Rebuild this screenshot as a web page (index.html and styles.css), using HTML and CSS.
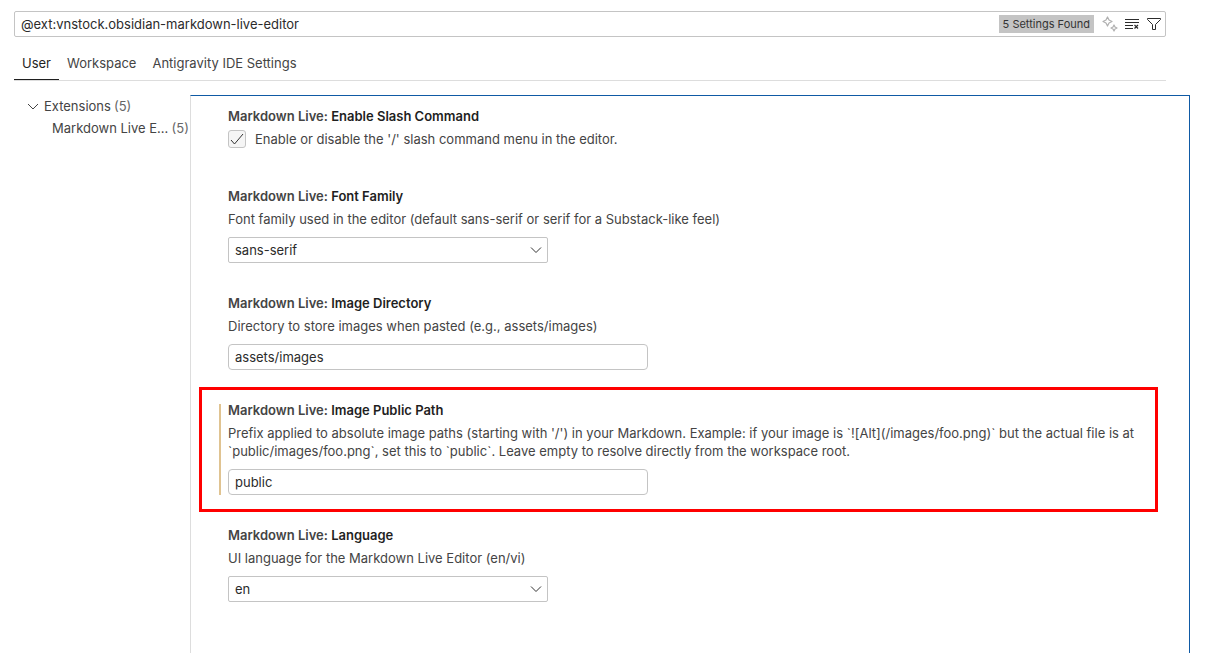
FILE: index.html
```html
<!DOCTYPE html>
<html lang="en">
<head>
    <meta charset="UTF-8">
    <meta name="viewport" content="width=device-width, initial-scale=1.0">
    <title>Settings</title>
    <link rel="stylesheet" href="styles.css">
</head>
<body>
    <div class="settings-editor">
        <header class="settings-header">
            <div class="search-box">
                <input type="text" class="search-input" aria-label="Search settings" value="@ext:vnstock.obsidian-markdown-live-editor">
                <span class="search-count">5 Settings Found</span>
                <div class="search-actions">
                    <button type="button" class="icon-btn" aria-label="Show AI results" disabled>
                        <svg width="16" height="16" viewBox="0 0 16 16" fill="none" stroke="currentColor" stroke-width="1.2" stroke-linejoin="round">
                            <path d="M5.5 1 L7 4 L10 5.5 L7 7 L5.5 10 L4 7 L1 5.5 L4 4 Z"/>
                            <path d="M12 9 L13 11 L15 12 L13 13 L12 15 L11 13 L9 12 L11 11 Z"/>
                        </svg>
                    </button>
                    <button type="button" class="icon-btn" aria-label="Clear search">
                        <svg width="16" height="16" viewBox="0 0 16 16" fill="none" stroke="currentColor">
                            <path d="M1 3.5H15M1 6.5H15M1 9.5H9M1 12.5H9"/>
                            <path d="M10.5 9 L14 12.5 M14 9 L10.5 12.5" stroke-width="1.2"/>
                        </svg>
                    </button>
                    <button type="button" class="icon-btn" aria-label="Filter settings">
                        <svg width="16" height="16" viewBox="0 0 16 16" fill="none" stroke="currentColor" stroke-linejoin="round">
                            <path d="M1.5 2.5H14.5V3.5L9.5 8.5V13.5H6.5V8.5L1.5 3.5Z"/>
                        </svg>
                    </button>
                </div>
            </div>
            <nav class="tabs">
                <a href="#" class="tab active">User</a>
                <a href="#" class="tab">Workspace</a>
                <a href="#" class="tab">Antigravity IDE Settings</a>
            </nav>
        </header>

        <div class="settings-body">
            <aside class="toc">
                <a href="#" class="toc-row">
                    <svg class="toc-arrow" width="16" height="16" viewBox="0 0 16 16" fill="none" stroke="currentColor">
                        <path d="M3 6L8 11L13 6"/>
                    </svg>
                    <span>Extensions</span>
                    <span class="toc-count">(5)</span>
                </a>
                <a href="#" class="toc-row toc-child">
                    <span>Markdown Live E...</span>
                    <span class="toc-count">(5)</span>
                </a>
            </aside>

            <main class="settings-list">
                <section class="setting setting-bool">
                    <h2 class="setting-title">Markdown Live: <span class="setting-name">Enable Slash Command</span></h2>
                    <div class="check-row">
                        <span class="check-box">
                            <input type="checkbox" id="slash-command" checked>
                            <svg class="check-mark" width="16" height="16" viewBox="0 0 16 16" fill="none" stroke="currentColor">
                                <path d="M2 9L5.5 13L14 3"/>
                            </svg>
                        </span>
                        <label for="slash-command">Enable or disable the '/' slash command menu in the editor.</label>
                    </div>
                </section>

                <section class="setting">
                    <h2 class="setting-title">Markdown Live: <span class="setting-name">Font Family</span></h2>
                    <label class="setting-desc" for="font-family">Font family used in the editor (default sans-serif or serif for a Substack-like feel)</label>
                    <div class="select-box">
                        <select id="font-family">
                            <option>sans-serif</option>
                        </select>
                        <svg class="select-arrow" width="16" height="16" viewBox="0 0 16 16" fill="none" stroke="currentColor">
                            <path d="M3 5.5L8 10.5L13 5.5"/>
                        </svg>
                    </div>
                </section>

                <section class="setting">
                    <h2 class="setting-title">Markdown Live: <span class="setting-name">Image Directory</span></h2>
                    <label class="setting-desc" for="image-directory">Directory to store images when pasted (e.g., assets/images)</label>
                    <input type="text" class="text-input" id="image-directory" value="assets/images">
                </section>

                <section class="setting setting-modified">
                    <h2 class="setting-title">Markdown Live: <span class="setting-name">Image Public Path</span></h2>
                    <label class="setting-desc" for="public-path">Prefix applied to absolute image paths (starting with '/') in your Markdown. Example: if your image is `![Alt](/images/foo.png)` but the actual file is at `public/images/foo.png`, set this to `public`. Leave empty to resolve directly from the workspace root.</label>
                    <input type="text" class="text-input" id="public-path" value="public">
                    <div class="highlight"></div>
                </section>

                <section class="setting">
                    <h2 class="setting-title">Markdown Live: <span class="setting-name">Language</span></h2>
                    <label class="setting-desc" for="language">UI language for the Markdown Live Editor (en/vi)</label>
                    <div class="select-box">
                        <select id="language">
                            <option>en</option>
                        </select>
                        <svg class="select-arrow" width="16" height="16" viewBox="0 0 16 16" fill="none" stroke="currentColor">
                            <path d="M3 5.5L8 10.5L13 5.5"/>
                        </svg>
                    </div>
                </section>
            </main>
        </div>
    </div>
</body>
</html>
```
FILE: styles.css
```css
* {
    margin: 0;
    padding: 0;
    box-sizing: border-box;
}

body {
    background: #fff;
    color: #444;
    font-family: Inter, "Liberation Sans", sans-serif;
    font-size: 13px;
    line-height: 18px;
}

a {
    color: inherit;
    text-decoration: none;
}

input,
select,
button {
    font: inherit;
    color: #2b2b2b;
}

.settings-editor {
    display: flex;
    flex-direction: column;
    min-height: 100vh;
    padding: 11px 24px 0 14px;
}

/* Header */
.settings-header {
    margin-right: 24px;
}

.search-box {
    display: flex;
    align-items: center;
    height: 26px;
    padding: 0 3px 0 6px;
    border: 1px solid #c4c4c4;
    border-radius: 2px;
}

.search-input {
    flex: 1;
    min-width: 0;
    border: none;
    outline: none;
    background: transparent;
}

.search-count {
    padding: 0 4px;
    background: #c4c4c4;
    color: #333;
    font-size: 11px;
}

.search-actions {
    display: flex;
    gap: 6px;
    margin-left: 8px;
}

.icon-btn {
    display: flex;
    border: none;
    background: none;
    color: #2b2b2b;
    cursor: pointer;
}

.icon-btn:disabled {
    color: #b0b0b0;
    cursor: default;
}

.tabs {
    display: flex;
    margin-top: 9px;
    border-bottom: 1px solid #ddd;
}

.tab {
    padding: 8px 8px 7px;
    border-bottom: 1px solid transparent;
}

.tab.active {
    color: #1f1f1f;
    border-bottom-color: #1f1f1f;
}

/* Table of contents */
.settings-body {
    display: flex;
    flex: 1;
    margin-top: 14px;
}

.toc {
    width: 176px;
    flex-shrink: 0;
}

.toc-row {
    display: flex;
    align-items: center;
    gap: 3px;
    height: 22px;
    padding-left: 11px;
    white-space: nowrap;
}

.toc-arrow {
    flex-shrink: 0;
}

.toc-count {
    color: #666;
}

.toc-child {
    justify-content: space-between;
    padding: 0 1px 0 38px;
}

/* Settings list */
.settings-list {
    flex: 1;
    min-width: 0;
    padding-right: 31px;
    border: 1px solid #0f5aa5;
    border-left-color: #ddd;
    border-bottom: none;
}

.setting {
    position: relative;
    padding: 12px 12px 19px 37px;
}

.setting:first-child {
    padding-top: 11px;
}

.setting-bool {
    padding-bottom: 27px;
}

.setting-title {
    margin-bottom: 5px;
    font-size: 13px;
    font-weight: 600;
}

.setting-name {
    color: #1f1f1f;
}

.setting-desc {
    display: block;
    margin-bottom: 9px;
}

.check-row {
    display: flex;
    align-items: center;
    gap: 9px;
}

.check-box {
    position: relative;
    display: flex;
}

.check-box input {
    appearance: none;
    width: 18px;
    height: 18px;
    border: 1px solid #c4c4c4;
    border-radius: 3px;
    background: #f5f5f5;
}

.check-mark {
    position: absolute;
    top: 1px;
    left: 1px;
    color: #333;
    pointer-events: none;
}

.check-box input:not(:checked) + .check-mark {
    display: none;
}

.select-box {
    position: relative;
    max-width: 320px;
}

.select-box select {
    appearance: none;
    display: block;
    width: 100%;
    height: 26px;
    padding: 0 24px 0 6px;
    border: 1px solid #c4c4c4;
    border-radius: 2px;
    background: #fff;
}

.select-arrow {
    position: absolute;
    top: 5px;
    right: 4px;
    color: #333;
    pointer-events: none;
}

.text-input {
    display: block;
    width: 100%;
    max-width: 420px;
    height: 26px;
    padding: 0 6px;
    border: 1px solid #c4c4c4;
    border-radius: 4px;
    background: #fff;
}

/* Modified setting marker */
.setting-modified::before {
    content: "";
    position: absolute;
    top: 15px;
    bottom: 19px;
    left: 28px;
    width: 2px;
    background: #e0c391;
}

.highlight {
    position: absolute;
    top: -2px;
    right: 0;
    bottom: 2px;
    left: 8px;
    border: 3px solid #f00;
    pointer-events: none;
}
```
